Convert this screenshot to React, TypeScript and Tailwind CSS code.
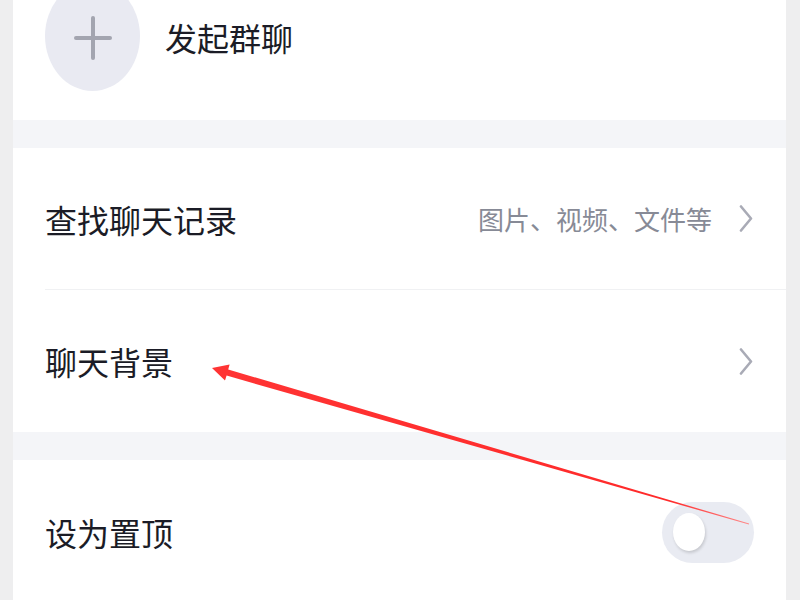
const FONT = { fontFamily: '"Noto Sans CJK SC", "Noto Sans", sans-serif' };

function Chevron() {
  return (
    <svg width="14" height="27" viewBox="0 0 14 27" className="shrink-0">
      <polyline
        points="2,1.5 12,13.5 2,25.5"
        fill="none"
        stroke="#a9abb6"
        strokeWidth="2.6"
        strokeLinecap="round"
        strokeLinejoin="round"
      />
    </svg>
  );
}

function Row({ label, hint, right }: { label: string; hint?: string; right?: React.ReactNode }) {
  return (
    <div className="flex items-center justify-between pl-[32px] pr-[33px] h-full">
      <span className="text-[32px] leading-none text-[#1b1c26]">{label}</span>
      <div className="flex items-center gap-[27px]">
        {hint && <span className="text-[26px] leading-none text-[#878a96]">{hint}</span>}
        {right ?? <Chevron />}
      </div>
    </div>
  );
}

export default function App() {
  return (
    <div className="relative w-[800px] h-[600px] overflow-hidden bg-[#eeeeef] pl-[13px] pr-[14px]" style={FONT}>
      <div className="flex flex-col h-full bg-[#f4f5f8]">
        {/* 发起群聊 */}
        <div className="h-[120px] shrink-0 bg-white overflow-hidden flex items-start pl-[32px]">
          <div className="-mt-[19px] w-[95px] h-[110px] rounded-[50%] bg-[#e9eaf2] flex items-center justify-center shrink-0">
            <svg width="38" height="44" viewBox="0 0 38 44" className="mt-[3px]">
              <line x1="2" y1="22" x2="36" y2="22" stroke="#a3a5b0" strokeWidth="4" strokeLinecap="round" />
              <line x1="19" y1="2" x2="19" y2="42" stroke="#a3a5b0" strokeWidth="4" strokeLinecap="round" />
            </svg>
          </div>
          <span className="ml-[25px] mt-[21px] text-[32px] leading-none text-[#1b1c26]">发起群聊</span>
        </div>

        {/* 聊天记录 / 背景 */}
        <div className="mt-[28px] h-[284px] shrink-0 bg-white flex flex-col">
          <div className="h-[141px]">
            <Row label="查找聊天记录" hint="图片、视频、文件等" />
          </div>
          <div className="ml-[32px] h-px bg-[#f0f1f3]" />
          <div className="h-[142px]">
            <Row label="聊天背景" />
          </div>
        </div>

        {/* 设为置顶 */}
        <div className="mt-[28px] h-[144px] shrink-0 bg-white">
          <div className="flex items-center justify-between pl-[32px] pr-[32px] h-full">
            <span className="text-[32px] leading-none text-[#1b1c26]">设为置顶</span>
            <div className="w-[92px] h-[61px] rounded-full bg-[#e9ebf2] flex items-center pl-[11px]">
              <div className="w-[32px] h-[38px] rounded-[50%] bg-white shadow-[1px_2px_3px_rgba(0,0,0,0.15)]" />
            </div>
          </div>
        </div>
      </div>

      {/* annotation arrow */}
      <svg className="absolute inset-0 pointer-events-none" width="800" height="600" viewBox="0 0 800 600">
        <defs>
          <linearGradient id="tail" x1="212" y1="368" x2="749" y2="524" gradientUnits="userSpaceOnUse">
            <stop offset="0" stopColor="#ff3434" />
            <stop offset="0.85" stopColor="#ff2a2a" />
            <stop offset="1" stopColor="#ff8a8a" />
          </linearGradient>
        </defs>
        <polygon
          points="212,368 229.6,364.4 228.2,369.4 749.1,523.6 748.9,524.4 226.6,375.6 225,380.6"
          fill="url(#tail)"
        />
      </svg>
    </div>
  );
}
